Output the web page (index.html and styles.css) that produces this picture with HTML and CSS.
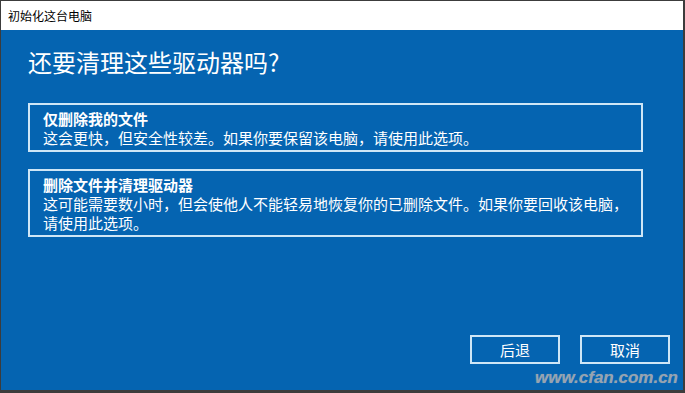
FILE: index.html
```html
<!doctype html>
<html lang="zh-CN">

<head>
    <meta charset="UTF-8">
    <title>初始化这台电脑</title>
    <link rel="stylesheet" href="styles.css">
</head>

<body>
    <div class="window">
        <div class="titlebar">初始化这台电脑</div>
        <div class="content">
            <h1 class="heading">还要清理这些驱动器吗?</h1>
            <div class="option">
                <div class="option-title">仅删除我的文件</div>
                <div class="option-desc">这会更快，但安全性较差。如果你要保留该电脑，请使用此选项。</div>
            </div>
            <div class="option">
                <div class="option-title">删除文件并清理驱动器</div>
                <div class="option-desc">这可能需要数小时，但会使他人不能轻易地恢复你的已删除文件。如果你要回收该电脑，<br>请使用此选项。</div>
            </div>
            <div class="buttons">
                <div class="button">后退</div>
                <div class="button">取消</div>
            </div>
        </div>
        <div class="watermark">www.cfan.com.cn</div>
    </div>
</body>

</html>
```

FILE: styles.css
```css
html,
body {
    margin: 0;
    padding: 0;
}

body {
    font-family: "Noto Sans CJK SC", "Liberation Sans", sans-serif;
}

.window {
    position: relative;
    box-sizing: border-box;
    width: 685px;
    height: 393px;
    border-top: 1px solid #3c3c3c;
    border-left: 1px solid #3c3c3c;
    border-right: 2px solid #3c3c3c;
    border-bottom: 3px solid #3c3c3c;
    display: flex;
    flex-direction: column;
    background: #0564b1;
}

.titlebar {
    height: 29px;
    line-height: 29px;
    padding-left: 7px;
    background: #fff;
    color: #000;
    font-size: 12px;
}

.content {
    flex: 1;
    display: flex;
    flex-direction: column;
    padding: 0 13px 26px 27px;
    color: #fff;
}

.heading {
    margin: 16px 0 25px;
    font-size: 24px;
    font-weight: normal;
    line-height: 32px;
}

.option {
    width: 585px;
    margin-bottom: 17px;
    padding: 4px 13px 3px;
    border: 2px solid #cfe6f6;
    font-size: 15px;
    line-height: 19px;
}

.option-title {
    font-weight: bold;
}

.buttons {
    margin-top: auto;
    display: flex;
    justify-content: flex-end;
    gap: 20px;
}

.button {
    width: 86px;
    height: 25px;
    line-height: 25px;
    border: 2px solid #cfe6f6;
    text-align: center;
    font-size: 15px;
}

.watermark {
    position: absolute;
    right: 5px;
    bottom: 2px;
    font-family: "Liberation Sans", sans-serif;
    font-size: 17px;
    font-weight: bold;
    font-style: italic;
    color: #98a3ae;
    text-shadow: 0 0 1px rgba(255, 255, 255, 0.3);
}
```
